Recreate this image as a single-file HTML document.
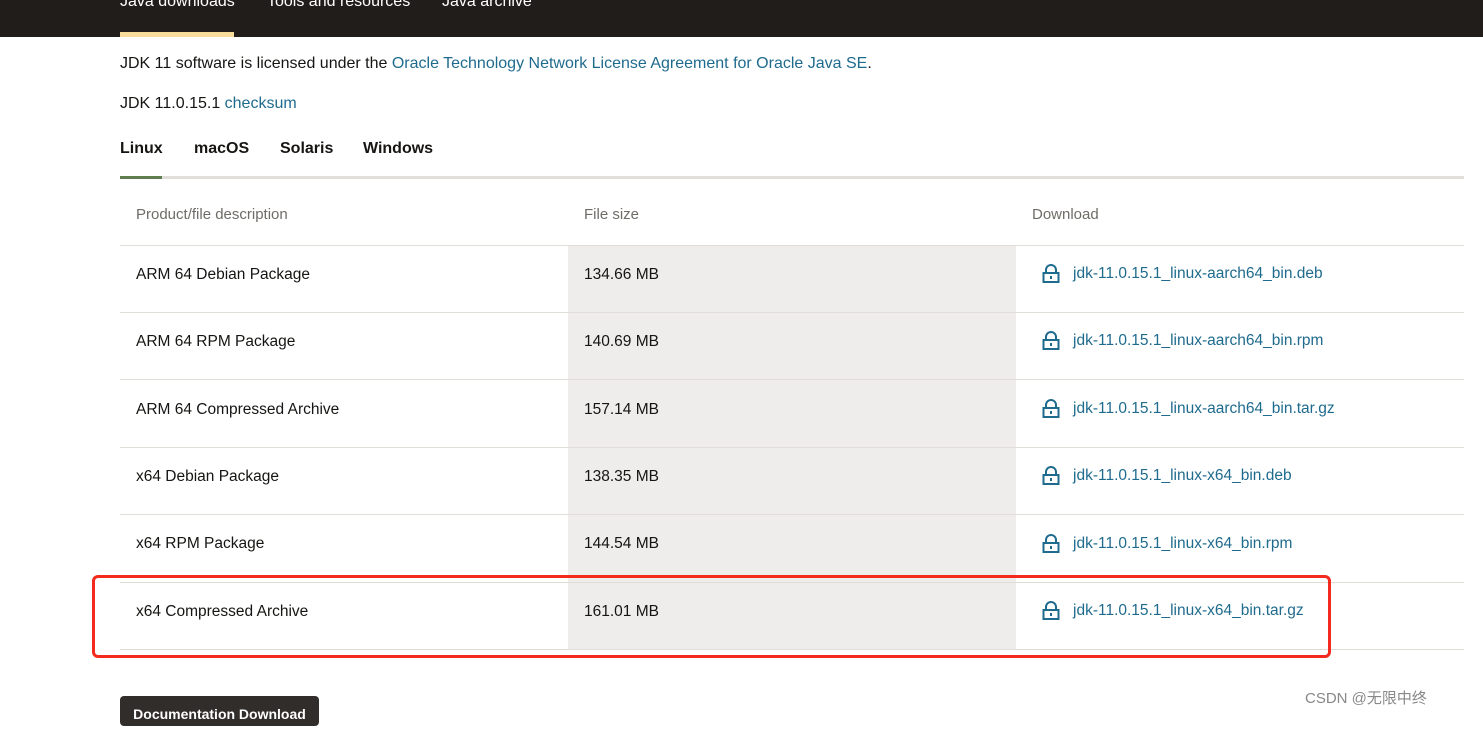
<!DOCTYPE html>
<html><head><meta charset="utf-8"><style>
body{margin:0;width:1483px;height:716px;overflow:hidden;background:#fff;font-family:"Liberation Sans","Noto Sans CJK SC",sans-serif;color:#161513;position:relative}
.hdr{position:absolute;left:0;top:0;width:1483px;height:37px;background:#201d1a}
.hdr span{position:absolute;top:-7px;color:#fff;font-size:16px}
.ul{position:absolute;left:120px;top:32px;width:114px;height:5px;background:#f8dc9b}
.t{position:absolute;font-size:16px;white-space:nowrap}
a{color:#1f6b8e;text-decoration:none}
.tabs span{position:absolute;top:140px;font-weight:bold;font-size:16px}
.tl{position:absolute;left:120px;top:176px;width:1344px;height:3px;background:#e2dfda}
.tla{position:absolute;left:120px;top:176px;width:42px;height:3px;background:#5f7d4f}
.grey{position:absolute;left:568px;top:245px;width:448px;height:404px;background:#efedeb}
.line{position:absolute;left:120px;width:1344px;height:1px;background:#e0ddd9}
.th{position:absolute;top:206px;font-size:15px;color:#6f6c68}
.lock{position:absolute;width:18px;height:20px}
.red{position:absolute;left:92px;top:575px;width:1233px;height:77px;border:3px solid #f52a1f;border-radius:6px}
.btn{position:absolute;left:120px;top:696px;width:199px;height:30px;background:#312d2a;border-radius:4px;color:#fff;font-size:14px;font-weight:bold;text-align:center;line-height:36px}
.wm{position:absolute;left:1305px;top:687px;font-size:15px;color:#888}
</style></head><body>
<div class="hdr"><span style="left:120px">Java downloads</span><span style="left:267px">Tools and resources</span><span style="left:442px">Java archive</span></div>
<div class="ul"></div>
<div class="t" style="left:120px;top:55px">JDK 11 software is licensed under the <a>Oracle Technology Network License Agreement for Oracle Java SE</a>.</div>
<div class="t" style="left:120px;top:95px">JDK 11.0.15.1 <a>checksum</a></div>
<div class="tabs"><span style="left:120px">Linux</span><span style="left:194px">macOS</span><span style="left:280px">Solaris</span><span style="left:363px">Windows</span></div>
<div class="tl"></div><div class="tla"></div>
<div class="grey"></div>
<div class="th" style="left:136px">Product/file description</div>
<div class="th" style="left:584px">File size</div>
<div class="th" style="left:1032px">Download</div>
<div class="line" style="top:245px"></div>
<div class="line" style="top:312px"></div>
<div class="line" style="top:379px"></div>
<div class="line" style="top:447px"></div>
<div class="line" style="top:514px"></div>
<div class="line" style="top:582px"></div>
<div class="line" style="top:649px"></div>
<div id="rows"></div>
<script></script>
<div class="t" style="left:136px;top:266px;font-size:15.5px">ARM 64 Debian Package</div>
<div class="t" style="left:584px;top:266px;font-size:15.5px">134.66 MB</div>
<div class="t" style="left:1073px;top:265px;font-size:15.5px"><a>jdk-11.0.15.1_linux-aarch64_bin.deb</a></div>
<div class="t" style="left:136px;top:333px;font-size:15.5px">ARM 64 RPM Package</div>
<div class="t" style="left:584px;top:333px;font-size:15.5px">140.69 MB</div>
<div class="t" style="left:1073px;top:332px;font-size:15.5px"><a>jdk-11.0.15.1_linux-aarch64_bin.rpm</a></div>
<div class="t" style="left:136px;top:401px;font-size:15.5px">ARM 64 Compressed Archive</div>
<div class="t" style="left:584px;top:401px;font-size:15.5px">157.14 MB</div>
<div class="t" style="left:1073px;top:400px;font-size:15.5px"><a>jdk-11.0.15.1_linux-aarch64_bin.tar.gz</a></div>
<div class="t" style="left:136px;top:468px;font-size:15.5px">x64 Debian Package</div>
<div class="t" style="left:584px;top:468px;font-size:15.5px">138.35 MB</div>
<div class="t" style="left:1073px;top:467px;font-size:15.5px"><a>jdk-11.0.15.1_linux-x64_bin.deb</a></div>
<div class="t" style="left:136px;top:535px;font-size:15.5px">x64 RPM Package</div>
<div class="t" style="left:584px;top:535px;font-size:15.5px">144.54 MB</div>
<div class="t" style="left:1073px;top:535px;font-size:15.5px"><a>jdk-11.0.15.1_linux-x64_bin.rpm</a></div>
<div class="t" style="left:136px;top:603px;font-size:15.5px">x64 Compressed Archive</div>
<div class="t" style="left:584px;top:603px;font-size:15.5px">161.01 MB</div>
<div class="t" style="left:1073px;top:602px;font-size:15.5px"><a>jdk-11.0.15.1_linux-x64_bin.tar.gz</a></div>
<svg width="1483" height="716" style="position:absolute;left:0;top:0" fill="none" stroke="#1f6b8e" stroke-width="2">
<defs><g id="lk"><path d="M4 9V6a5 5 0 0 1 10 0v3"/><rect x="1.5" y="9" width="15" height="9"/><path d="M9 12v3"/></g></defs>
<use href="#lk" x="1042" y="264"/><use href="#lk" x="1042" y="331"/><use href="#lk" x="1042" y="399"/>
<use href="#lk" x="1042" y="466"/><use href="#lk" x="1042" y="534"/><use href="#lk" x="1042" y="601"/>
</svg>
<div class="red"></div>
<div class="btn">Documentation Download</div>
<div class="wm">CSDN @无限中终</div>
</body></html>
